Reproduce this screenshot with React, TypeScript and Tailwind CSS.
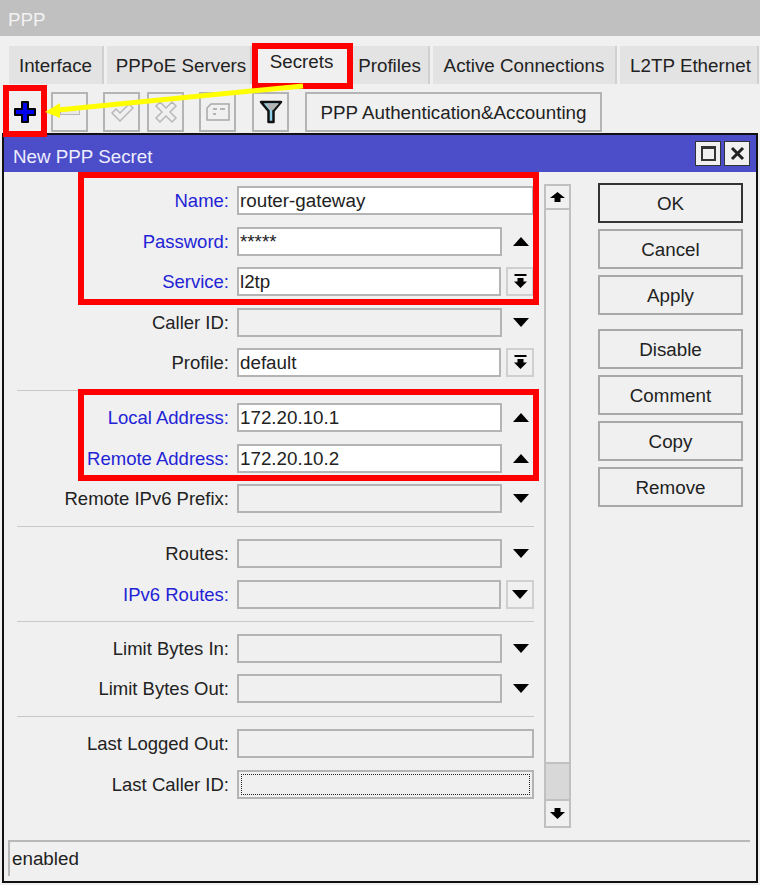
const tabs = [
  { label: 'Interface', cls: 'w-[95px] ml-[9px]' },
  { label: 'PPPoE Servers', cls: 'w-[145px] ml-[3px] pl-[5px]' },
  { label: 'Secrets', cls: 'w-[97px] ml-[1px]', active: true },
  { label: 'Profiles', cls: 'w-[79px] ml-[1px]' },
  { label: 'Active Connections', cls: 'w-[184px] ml-[3px]' },
  { label: 'L2TP Ethernet', cls: 'w-[139px] ml-[3px] pl-[4px]' },
];

function UpArrow() {
  return (
    <svg width="26" height="29" viewBox="0 0 26 29" className="shrink-0">
      <path d="M5 19 L13 10 L21 19 Z" fill="#000" />
    </svg>
  );
}

function DownArrow() {
  return (
    <svg width="26" height="29" viewBox="0 0 26 29" className="shrink-0">
      <path d="M5 10 L21 10 L13 19 Z" fill="#000" />
    </svg>
  );
}

function ComboButton() {
  return (
    <div className="w-[28px] h-[29px] shrink-0 border-2 border-[#cfcfcf] flex items-center justify-center">
      <svg width="15" height="17" viewBox="0 0 15 17">
        <rect x="1.5" y="1" width="12" height="2" fill="#000" />
        <path d="M4.5 5 H10.5 V8.5 H14 L7.5 15 L1 8.5 H4.5 Z" fill="#000" />
      </svg>
    </div>
  );
}

type Row = {
  label: string;
  value?: string;
  blue?: boolean;
  side?: 'up' | 'down' | 'combo' | 'dropdown';
  white?: boolean;
  dotted?: boolean;
};

function FormRow({ label, value, blue, side, white, dotted }: Row) {
  return (
    <div className="flex h-[29px] items-center">
      <div className={`w-[225px] shrink-0 pt-[1px] text-right text-[18.5px] ${blue ? 'text-[#2323d6]' : 'text-[#222]'}`}>{label}:</div>
      <div className={`ml-[8px] h-[29px] flex-1 border-2 border-[#b4b4b4] px-[1px] flex items-center leading-none ${white ? 'bg-white' : 'bg-[#f0f0f0]'}`}>
        {dotted ? <div className="w-full h-[21px] mx-[1px] border border-dotted border-[#222]" /> : <span className="pt-[2px]">{value}</span>}
      </div>
      {side === 'up' && <div className="ml-[6px]"><UpArrow /></div>}
      {side === 'down' && <div className="ml-[6px]"><DownArrow /></div>}
      {side === 'combo' && <div className="ml-[5px]"><ComboButton /></div>}
      {side === 'dropdown' && (
        <div className="ml-[5px] w-[28px] h-[29px] border-2 border-[#cfcfcf] flex items-center justify-center"><DownArrow /></div>
      )}
    </div>
  );
}

const groups: Row[][] = [
  [
    { label: 'Name', value: 'router-gateway', blue: true, white: true },
    { label: 'Password', value: '*****', blue: true, white: true, side: 'up' },
    { label: 'Service', value: 'l2tp', blue: true, white: true, side: 'combo' },
    { label: 'Caller ID', side: 'down' },
    { label: 'Profile', value: 'default', white: true, side: 'combo' },
  ],
  [
    { label: 'Local Address', value: '172.20.10.1', blue: true, white: true, side: 'up' },
    { label: 'Remote Address', value: '172.20.10.2', blue: true, white: true, side: 'up' },
    { label: 'Remote IPv6 Prefix', side: 'down' },
  ],
  [
    { label: 'Routes', side: 'down' },
    { label: 'IPv6 Routes', blue: true, side: 'dropdown' },
  ],
  [
    { label: 'Limit Bytes In', side: 'down' },
    { label: 'Limit Bytes Out', side: 'down' },
  ],
  [
    { label: 'Last Logged Out' },
    { label: 'Last Caller ID', dotted: true },
  ],
];

function ToolButton({ children, cls }: { children: React.ReactNode; cls: string }) {
  return (
    <div className={`h-[40px] w-[37px] border-2 border-[#b4b4b4] flex items-center justify-center ${cls}`}>{children}</div>
  );
}

function SideButton({ label, cls = '', isDefault = false }: { label: string; cls?: string; isDefault?: boolean }) {
  return (
    <div className={`h-[40px] border-2 pt-[2px] flex items-center justify-center ${isDefault ? 'border-[#333]' : 'border-[#a8a8a8]'} ${cls}`}>{label}</div>
  );
}

export default function App() {
  return (
    <div className="relative w-[760px] h-[885px] overflow-hidden bg-[#f0f0f0] font-['Liberation_Sans',sans-serif] text-[18.8px] text-[#222] flex flex-col">
      <div className="h-[36px] bg-[#c0c0c0] pl-[8px] pt-[4px] flex items-center text-[#f2f2f2] shrink-0">PPP</div>

      <div className="flex h-[38px] mt-[10px] shrink-0 items-stretch">
        {tabs.map((t) => (
          <div
            key={t.label}
            className={`${t.cls} shrink-0 flex items-center justify-center whitespace-nowrap ${t.active ? 'bg-[#f0f0f0] pb-[6px]' : 'bg-[#e3e3e3] border-r-2 border-[#d0d0d0] pt-[3px]'}`}
          >
            {t.label}
          </div>
        ))}
      </div>

      <div className="flex items-center h-[40px] mt-[8px] pl-[9px] shrink-0">
        <div className="w-[31px] h-[40px] flex items-center justify-center">
          <svg width="26" height="26" viewBox="0 0 26 26">
            <path d="M10 3 H16 V10 H23 V16 H16 V23 H10 V16 H3 V10 H10 Z" fill="#0000f0" stroke="#000" strokeWidth="2" strokeLinejoin="round" />
          </svg>
        </div>
        <ToolButton cls="ml-[11px]">
          <div className="w-[20px] h-[6px] border border-[#b8b8b8] bg-[#e8e8e8]" />
        </ToolButton>
        <ToolButton cls="ml-[15px]">
          <svg width="24" height="22" viewBox="0 0 24 22">
            <path d="M2 12 L6 8 L10 12 L19 3 L23 7 L10 20 Z" fill="#f0f0f0" stroke="#b8b8b8" strokeWidth="1.5" />
          </svg>
        </ToolButton>
        <ToolButton cls="ml-[7px]">
          <svg width="24" height="24" viewBox="0 0 24 24">
            <path d="M6 2 L12 8 L18 2 L22 6 L16 12 L22 18 L18 22 L12 16 L6 22 L2 18 L8 12 L2 6 Z" fill="#f0f0f0" stroke="#b8b8b8" strokeWidth="1.5" />
          </svg>
        </ToolButton>
        <ToolButton cls="ml-[15px]">
          <svg width="26" height="20" viewBox="0 0 26 20">
            <path d="M6 2 H24 V18 H2 V6 Z" fill="#f0f0f0" stroke="#a8a8a8" strokeWidth="1.5" />
            <path d="M8 7 H12 M15 7 H20 M8 12 H11" stroke="#a0a0a0" strokeWidth="1.5" />
          </svg>
        </ToolButton>
        <ToolButton cls="ml-[16px]">
          <svg width="24" height="26" viewBox="0 0 24 26">
            <path d="M2 3 H22 L14.5 12 V23 L9.5 23 V12 Z" fill="#8fd0e8" stroke="#111" strokeWidth="2.5" strokeLinejoin="round" />
            <path d="M7 4.5 H20 L14 11 H11 Z" fill="#b4b4b4" />
          </svg>
        </ToolButton>
        <div className="ml-[16px] h-[40px] w-[297px] border-2 border-[#b4b4b4] pt-[2px] flex items-center justify-center whitespace-nowrap">
          PPP Authentication&amp;Accounting
        </div>
      </div>

      {/* dialog */}
      <div className="mx-[2px] mt-[1px] flex-1 mb-[2px] border-2 border-[#111] bg-[#f0f0f0] flex flex-col min-h-0">
        <div className="h-[37px] bg-[#4b4dc9] shrink-0 flex items-center pl-[9px] pr-[6px] text-[#eeeeff]">
          <span className="flex-1 pt-[8px]">New PPP Secret</span>
          <div className="w-[26px] h-[25px] bg-[#f0f0f0] border border-[#333] flex items-center justify-center">
            <div className="w-[15px] h-[15px] border-2 border-[#333] border-t-[3px] bg-[#f0f0f0]" />
          </div>
          <div className="ml-[3px] w-[26px] h-[25px] bg-[#f0f0f0] border border-[#333] flex items-center justify-center">
            <svg width="15" height="15" viewBox="0 0 15 15">
              <path d="M2 2 L13 13 M13 2 L2 13" stroke="#222" strokeWidth="3" />
            </svg>
          </div>
        </div>

        <div className="flex flex-1 min-h-0">
          <div className="w-[530px] shrink-0 pt-[14px]">
            {groups.map((g, i) => (
              <div key={i}>
                {i > 0 && <div className={`ml-[13px] h-[1px] bg-[#c8c8c8] ${i === 3 ? 'my-[12px]' : 'my-[12.5px]'}`} />}
                <div className="flex flex-col gap-[11.5px]">
                  {g.map((r) => (
                    <FormRow key={r.label} {...r} />
                  ))}
                </div>
              </div>
            ))}
          </div>

          {/* scrollbar */}
          <div className="ml-[10px] mt-[12px] w-[27px] h-[644px] border-2 border-[#c0c0c0] flex flex-col shrink-0">
            <div className="h-[24px] border-b-2 border-[#c0c0c0] flex items-center justify-center">
              <svg width="15" height="11" viewBox="0 0 15 11"><path d="M7.5 0 L15 6 H10.5 V10 H4.5 V6 H0 Z" fill="#000" /></svg>
            </div>
            <div className="flex-1" />
            <div className="h-[37px] bg-[#d8d8d8] border-t-2 border-[#c0c0c0]" />
            <div className="h-[27px] border-t-2 border-[#c0c0c0] flex items-center justify-center">
              <svg width="15" height="11" viewBox="0 0 15 11"><path d="M4.5 0 H10.5 V4 H15 L7.5 11 L0 4 H4.5 Z" fill="#000" /></svg>
            </div>
          </div>

          {/* buttons */}
          <div className="ml-[27px] mt-[11px] w-[145px] shrink-0 flex flex-col">
            <SideButton label="OK" isDefault />
            <SideButton label="Cancel" cls="mt-[6px]" />
            <SideButton label="Apply" cls="mt-[6px]" />
            <SideButton label="Disable" cls="mt-[14px]" />
            <SideButton label="Comment" cls="mt-[6px]" />
            <SideButton label="Copy" cls="mt-[6px]" />
            <SideButton label="Remove" cls="mt-[6px]" />
          </div>
        </div>

        <div className="mx-[4px] mb-[5px] h-[36px] w-[742px] border-t-2 border-l-2 border-[#b8b8b8] shrink-0 flex items-center pl-[2px]">enabled</div>
      </div>

      {/* annotations */}
      <div className="absolute left-[252px] top-[43px] w-[101px] h-[46px] border-[6px] border-[#ff0000]" />
      <div className="absolute left-[3px] top-[85px] w-[44px] h-[52px] border-[6px] border-[#ff0000]" />
      <div className="absolute left-[78px] top-[172px] w-[461px] h-[133px] border-[6px] border-[#ff0000]" />
      <div className="absolute left-[78px] top-[389px] w-[461px] h-[92px] border-[6px] border-[#ff0000]" />
      <svg className="absolute left-0 top-0" width="320" height="130" viewBox="0 0 320 130">
        <path d="M303 86 L58 110" stroke="#ffff00" strokeWidth="5" />
        <path d="M45 112 L60 103 L60 118 Z" fill="#ffff00" />
      </svg>
    </div>
  );
}
